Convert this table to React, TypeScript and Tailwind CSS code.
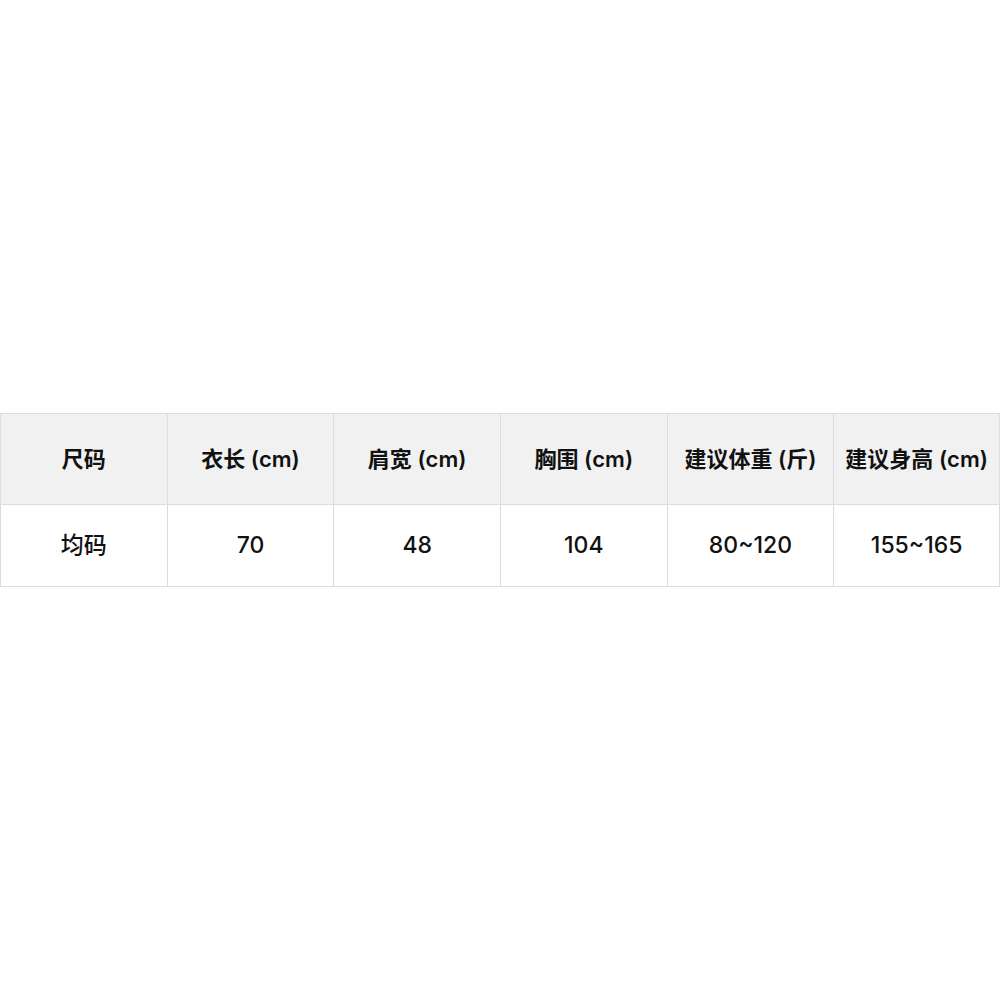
import React from 'react';

const headers = ['尺码', '衣长 (cm)', '肩宽 (cm)', '胸围 (cm)', '建议体重 (斤)', '建议身高 (cm)'];
const values = ['均码', '70', '48', '104', '80~120', '155~165'];

const App: React.FC = () => {
  return (
    <div
      className="min-h-screen w-full bg-white flex items-center text-[#111]"
      style={{ fontFamily: 'Inter, "Noto Sans CJK SC", sans-serif' }}
    >
      <div className="w-full border-y border-[#dcdcdc]">
        <div className="grid grid-cols-6 h-[91px] bg-[#f1f1f1] border-b border-[#dcdcdc]">
          {headers.map((h, i) => (
            <div
              key={h}
              className={`flex items-center justify-center text-[22px] font-semibold border-l border-[#dcdcdc] ${i === 5 ? 'border-r' : ''}`}
            >
              {h}
            </div>
          ))}
        </div>
        <div className="grid grid-cols-6 h-[81px]">
          {values.map((v, i) => (
            <div
              key={v}
              className={`flex items-center justify-center text-[23px] font-medium border-l border-[#dcdcdc] ${i === 5 ? 'border-r' : ''}`}
            >
              {v}
            </div>
          ))}
        </div>
      </div>
    </div>
  );
};

export default App;
